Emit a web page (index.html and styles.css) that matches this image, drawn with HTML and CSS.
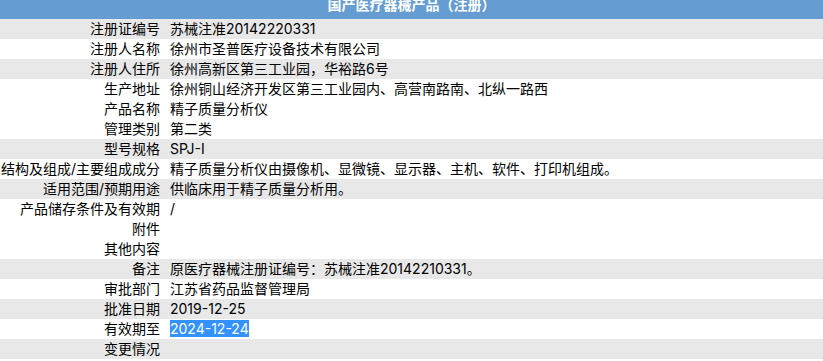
FILE: index.html
```html
<!DOCTYPE html>
<html lang="zh-CN">
<head>
<meta charset="utf-8">
<title>国产医疗器械产品（注册）</title>
<link rel="stylesheet" href="styles.css">
</head>
<body>
<div class="sheet">
  <div class="title">国产医疗器械产品（注册）</div>
  <div class="row alt"><div class="label">注册证编号</div><div class="value">苏械注准20142220331</div></div>
  <div class="row"><div class="label">注册人名称</div><div class="value">徐州市圣普医疗设备技术有限公司</div></div>
  <div class="row alt"><div class="label">注册人住所</div><div class="value">徐州高新区第三工业园，华裕路6号</div></div>
  <div class="row"><div class="label">生产地址</div><div class="value">徐州铜山经济开发区第三工业园内、高营南路南、北纵一路西</div></div>
  <div class="row"><div class="label">产品名称</div><div class="value">精子质量分析仪</div></div>
  <div class="row"><div class="label">管理类别</div><div class="value">第二类</div></div>
  <div class="row alt"><div class="label">型号规格</div><div class="value">SPJ-I</div></div>
  <div class="row"><div class="label">结构及组成/主要组成成分</div><div class="value">精子质量分析仪由摄像机、显微镜、显示器、主机、软件、打印机组成。</div></div>
  <div class="row alt"><div class="label">适用范围/预期用途</div><div class="value">供临床用于精子质量分析用。</div></div>
  <div class="row"><div class="label">产品储存条件及有效期</div><div class="value">/</div></div>
  <div class="row"><div class="label">附件</div><div class="value"></div></div>
  <div class="row"><div class="label">其他内容</div><div class="value"></div></div>
  <div class="row alt"><div class="label">备注</div><div class="value">原医疗器械注册证编号：苏械注准20142210331。</div></div>
  <div class="row"><div class="label">审批部门</div><div class="value">江苏省药品监督管理局</div></div>
  <div class="row alt"><div class="label">批准日期</div><div class="value">2019-12-25</div></div>
  <div class="row"><div class="label">有效期至</div><div class="value"><span class="selected">2024-12-24</span></div></div>
  <div class="row alt"><div class="label">变更情况</div><div class="value"></div></div>
</div>
</body>
</html>
```
FILE: styles.css
```css
html, body {
  margin: 0;
  padding: 0;
  background: #ffffff;
  overflow: hidden;
}
body {
  font-family: "Inter", "Noto Sans CJK SC", sans-serif;
  font-size: 14px;
  color: #000000;
}
.sheet {
  margin-top: -11px;
  display: flex;
  flex-direction: column;
}
.title {
  height: 30px;
  line-height: 30px;
  background: #659cd1;
  color: #ffffff;
  font-weight: bold;
  text-align: center;
  font-family: "Noto Sans CJK SC", sans-serif;
}
.row {
  display: grid;
  grid-template-columns: 160px 1fr;
  column-gap: 10px;
  height: 20px;
  line-height: 20px;
  background: #ffffff;
  white-space: nowrap;
}
.row.alt {
  background: #e8e8e8;
}
.label {
  display: flex;
  justify-content: flex-end;
}
.value {
  overflow: hidden;
}
.selected {
  background: #3392ff;
  color: #ffffff;
}
```
